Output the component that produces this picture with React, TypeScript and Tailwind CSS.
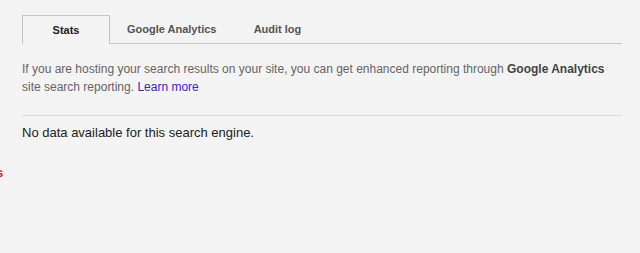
const tabs = ["Stats", "Google Analytics", "Audit log"];

export default function App() {
  return (
    <div className="h-[253px] w-[640px] overflow-hidden bg-[#f4f4f4] font-['Liberation_Sans',Arial,sans-serif]">
      <div className="pl-[22px] pr-[18px] pt-[15px]">
        <div className="flex h-[29px] border-b border-[#c6c6c6]">
          {tabs.map((tab, i) => (
            <div
              key={tab}
              className={
                i === 0
                  ? "-mb-px flex min-w-[88px] items-center justify-center border border-b-0 border-[#c6c6c6] bg-[#f4f4f4] px-[17px] text-[11px] font-bold text-[#222]"
                  : "flex min-w-[88px] items-center justify-center px-[17px] text-[11px] font-bold text-[#555]"
              }
            >
              {tab}
            </div>
          ))}
        </div>
        <p className="mt-[16px] text-[12px] leading-[18px] text-[#666]">
          If you are hosting your search results on your site, you can get
          enhanced reporting through{" "}
          <span className="font-bold text-[#444]">Google Analytics</span> site
          search reporting.{" "}
          <a href="#" className="text-[#3d22d0]">
            Learn more
          </a>
        </p>
        <div className="mt-[19px] border-t border-[#dcdcdc]" />
        <div className="mt-[8px] text-[13px] leading-[18px] text-[#222]">
          No data available for this search engine.
        </div>
      </div>
      <div className="-ml-[4px] mt-[22px] text-[13px] font-bold leading-[18px] text-[#e0222c]">
        s
      </div>
    </div>
  );
}
